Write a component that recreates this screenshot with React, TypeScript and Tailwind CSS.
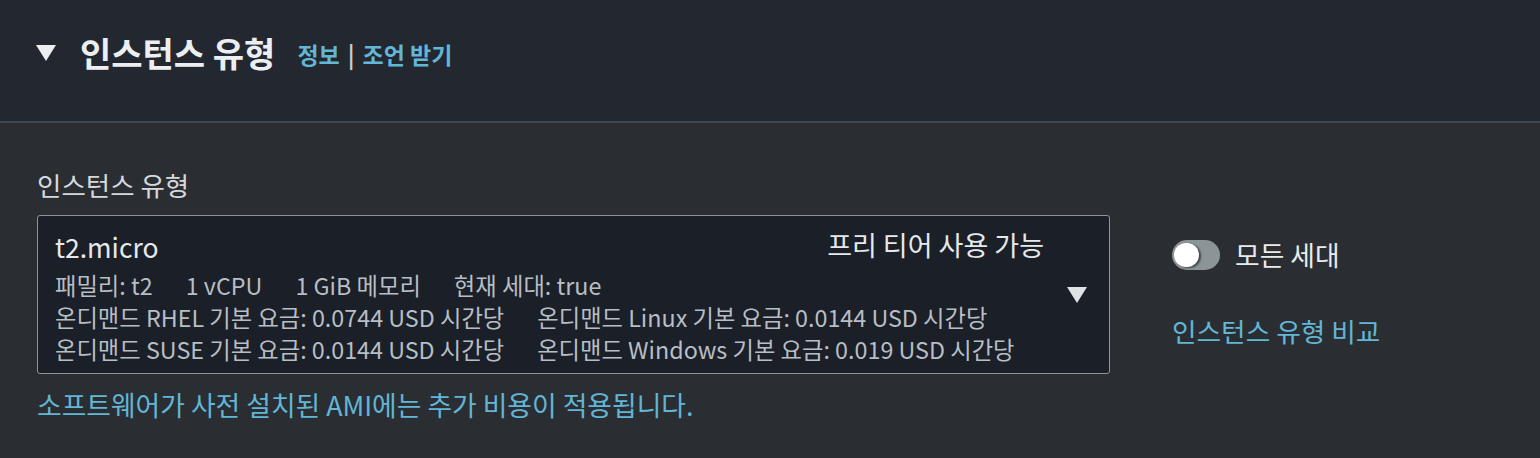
import React from "react";

const font = { fontFamily: '"Noto Sans CJK KR", "Noto Sans", sans-serif' };

function Caret({ className }: { className?: string }) {
  return (
    <svg viewBox="0 0 20 16" className={className} aria-hidden="true">
      <polygon points="0,0 20,0 10,16" fill="currentColor" />
    </svg>
  );
}

export default function App() {
  return (
    <div style={font} className="w-[1540px] h-[458px] bg-[#2a2e33] overflow-hidden">
      <div className="h-[123px] bg-[#232730] border-b-2 border-[#414750] flex items-center pl-[36px] pb-[16px]">
        <Caret className="w-[20px] h-[16px] text-[#eceff1]" />
        <h2 className="ml-[24px] text-[34px] font-bold text-[#eceff1] leading-none">인스턴스 유형</h2>
        <div className="ml-[22px] flex items-center text-[23px] font-bold text-[#62b6d6] leading-none pt-[3px]">
          <span>정보</span>
          <span className="mx-[8px] text-[#c9cdd1]">|</span>
          <span>조언 받기</span>
        </div>
      </div>

      <div className="pl-[37px] pt-[46px]">
        <div className="text-[26.5px] text-[#d5d9dd] leading-[32px]">인스턴스 유형</div>
        <div className="flex items-start mt-[14px]">
          <div className="w-[1073px] h-[159px] bg-[#1b1f27] border border-[#8d9699] rounded-[3px] flex pl-[17px] pr-[22px]">
            <div className="flex-1 pt-[14px]">
              <div className="flex items-center justify-between">
                <span className="text-[26.5px] text-[#e6e9ec] leading-[34px]">t2.micro</span>
                <span className="text-[27px] text-[#e6e9ec] leading-[34px] mt-[-4px]">프리 티어 사용 가능</span>
              </div>
              <div className="text-[23.3px] text-[#b7bec5] leading-[32px] mt-[5px]">
                <div className="flex gap-[33px]">
                  <span>패밀리: t2</span>
                  <span>1 vCPU</span>
                  <span>1 GiB 메모리</span>
                  <span>현재 세대: true</span>
                </div>
                <div className="flex gap-[33px]">
                  <span>온디맨드 RHEL 기본 요금: 0.0744 USD 시간당</span>
                  <span>온디맨드 Linux 기본 요금: 0.0144 USD 시간당</span>
                </div>
                <div className="flex gap-[33px]">
                  <span>온디맨드 SUSE 기본 요금: 0.0144 USD 시간당</span>
                  <span>온디맨드 Windows 기본 요금: 0.019 USD 시간당</span>
                </div>
              </div>
            </div>
            <Caret className="self-center w-[20px] h-[16px] text-[#dfe3e6] ml-[23px]" />
          </div>
          <div className="ml-[62px] pt-[23px]">
            <div className="flex items-center">
              <div className="relative w-[48px] h-[30px] rounded-full bg-[#8b9599]">
                <div className="absolute left-[2px] top-[3px] w-[25px] h-[24px] rounded-full bg-white shadow-[2px_1px_2px_rgba(0,0,0,0.55)]" />
              </div>
              <span className="ml-[15px] text-[26.8px] text-[#e9ebed] leading-[34px]">모든 세대</span>
            </div>
            <div className="mt-[42px] text-[26.7px] text-[#62b6d6] leading-[34px]">인스턴스 유형 비교</div>
          </div>
        </div>
        <div className="mt-[14px] text-[26.8px] text-[#62b6d6] leading-[34px]">소프트웨어가 사전 설치된 AMI에는 추가 비용이 적용됩니다.</div>
      </div>
    </div>
  );
}
